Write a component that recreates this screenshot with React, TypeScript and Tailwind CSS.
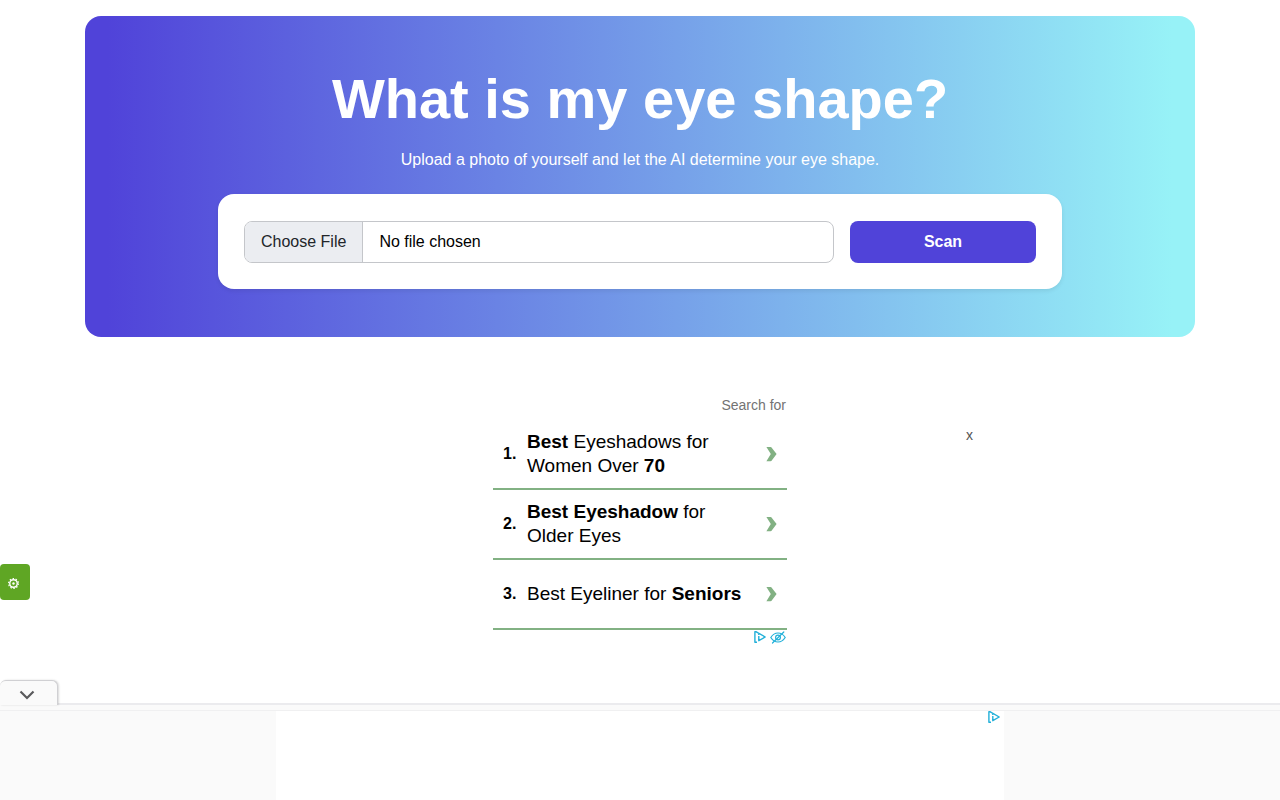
import React from 'react';

interface SearchTopic {
  id: number;
  label: React.ReactNode;
}

const topics: SearchTopic[] = [
  { id: 1, label: <><b>Best</b> Eyeshadows for Women Over <b>70</b></> },
  { id: 2, label: <><b>Best Eyeshadow</b> for Older Eyes</> },
  { id: 3, label: <>Best Eyeliner for <b>Seniors</b></> },
];

const AdChoicesIcon = () => (
  <svg className="h-3 w-3" viewBox="0 0 12 12" fill="none" stroke="#22b0d9" strokeWidth="1.4" strokeLinejoin="round" aria-hidden="true">
    <path d="M3 11.2H.9V.8h1.4L11.2 6 4.8 9.7V5" />
    <path d="M4.800 2.800v1.200" />
  </svg>
);

const HideAdIcon = () => (
  <svg className="h-[14px] w-4" viewBox="0 0 16 14" fill="none" stroke="#22b0d9" strokeWidth="1.2" strokeLinecap="round" aria-hidden="true">
    <path d="M.8 7.5C2.8 4.3 5.2 3 8 3s5.2 1.300 7.200 4.500C13.200 10.700 10.800 12 8 12S2.800 10.700.8 7.500Z" />
    <circle cx="8" cy="7.500" r="2.400" />
    <path d="M2.500 13 13.800 2" />
  </svg>
);

const Hero = () => (
  <section className="mx-auto max-w-[1110px] rounded-2xl bg-linear-to-r/srgb from-[#5043d9] from-2% to-[#97f2f7] to-98% px-4 pt-12 pb-12 text-center text-white">
    <h1 className="text-[56px] leading-[70px] font-bold">What is my eye shape?</h1>
    <p className="mt-[14px] text-base leading-6">Upload a photo of yourself and let the AI determine your eye shape.</p>

    <form
      className="mx-auto mt-[22px] flex max-w-[844px] gap-4 rounded-2xl bg-white px-[26px] pt-[27px] pb-[26px] shadow-[0_2px_4px_rgba(0,0,0,0.08)]"
      onSubmit={(e) => e.preventDefault()}
    >
      <input
        type="file"
        aria-label="Photo"
        className="h-[42px] min-w-0 flex-1 rounded-lg border border-[#c4c6ca] bg-white text-base text-black file:mr-4 file:h-10 file:border-r file:border-[#c4c6ca] file:bg-[#ebedf1] file:px-4 file:text-[#212529]"
      />
      <button type="submit" className="h-[42px] w-[186px] rounded-lg bg-[#5043d9] font-bold text-white">
        Scan
      </button>
    </form>
  </section>
);

const RelatedSearches = () => (
  <aside className="mx-auto mt-[58px] w-[294px] text-black">
    <p className="mb-[5px] pr-px text-right text-sm leading-5 text-[#737373]">Search for</p>
    <ol>
      {topics.map((topic) => (
        <li key={topic.id} className="border-b-2 border-[#82b183]">
          <a href="#" className="flex h-[68px] items-center pl-2.5">
            <span className="w-6 font-bold">{topic.id}.</span>
            <span className="w-[220px] pr-1 text-[19px] leading-6">{topic.label}</span>
            <svg className="ml-[19px] h-4 w-[11px]" viewBox="0 0 11 16" fill="#82b183" aria-hidden="true">
              <path d="M.4 1h4q1 0 1.700 1.200L10.600 8 6.100 14Q5.400 15.200 4.400 15.200H.4L4.800 8Z" />
            </svg>
          </a>
        </li>
      ))}
    </ol>
    <div className="flex items-center justify-end gap-1 pr-px">
      <AdChoicesIcon />
      <HideAdIcon />
    </div>
  </aside>
);

const StickyAd = () => (
  <footer className="fixed inset-x-0 bottom-0">
    <button
      aria-label="Collapse ad"
      className="relative z-10 -mb-0.5 flex h-[25px] w-[58px] items-center justify-center rounded-t-md border-t border-r border-[#d0d0d3] bg-[#fafafa] pt-1 pr-1 shadow-[1px_0_2px_rgba(0,0,0,0.15)]"
    >
      <svg className="h-2.5 w-4" viewBox="0 0 16 10" fill="none" stroke="#5a5a5c" strokeWidth="2.2" aria-hidden="true">
        <path d="m1.500 1.500 6.500 6.500 6.500-6.500" />
      </svg>
    </button>
    <div className="border-t-2 border-[#ebebee] bg-[#fafafa] pt-[5px]">
      <div className="border-t border-[#f0f0f1]">
        <div className="mx-auto flex h-[89px] max-w-[728px] items-start justify-end bg-white pr-1">
          <AdChoicesIcon />
        </div>
      </div>
    </div>
  </footer>
);

const App: React.FC = () => {
  return (
    <div className="relative min-h-screen bg-white px-4 pt-4 font-['Liberation_Sans',sans-serif]">
      <Hero />
      <RelatedSearches />

      <button aria-label="Close ad" className="absolute top-[425px] left-[966px] text-sm leading-5 text-[#555]">
        x
      </button>

      {/* Privacy settings tab */}
      <button
        aria-label="Privacy settings"
        className="fixed top-[564px] left-0 flex h-9 w-[30px] items-center rounded-sm bg-[#5fa624] pl-2 text-white"
      >
        <svg className="mt-0.5 h-[11px] w-[11px]" viewBox="0 0 22 22" fill="none" stroke="currentColor" aria-hidden="true">
          <circle cx="11" cy="11" r="7.500" strokeWidth="2.800" />
          <circle cx="11" cy="11" r="2.400" fill="currentColor" stroke="none" />
          <circle cx="11" cy="11" r="9.800" strokeWidth="2.400" strokeDasharray="3 3.160" />
        </svg>
      </button>

      <StickyAd />
    </div>
  );
};

export default App;
